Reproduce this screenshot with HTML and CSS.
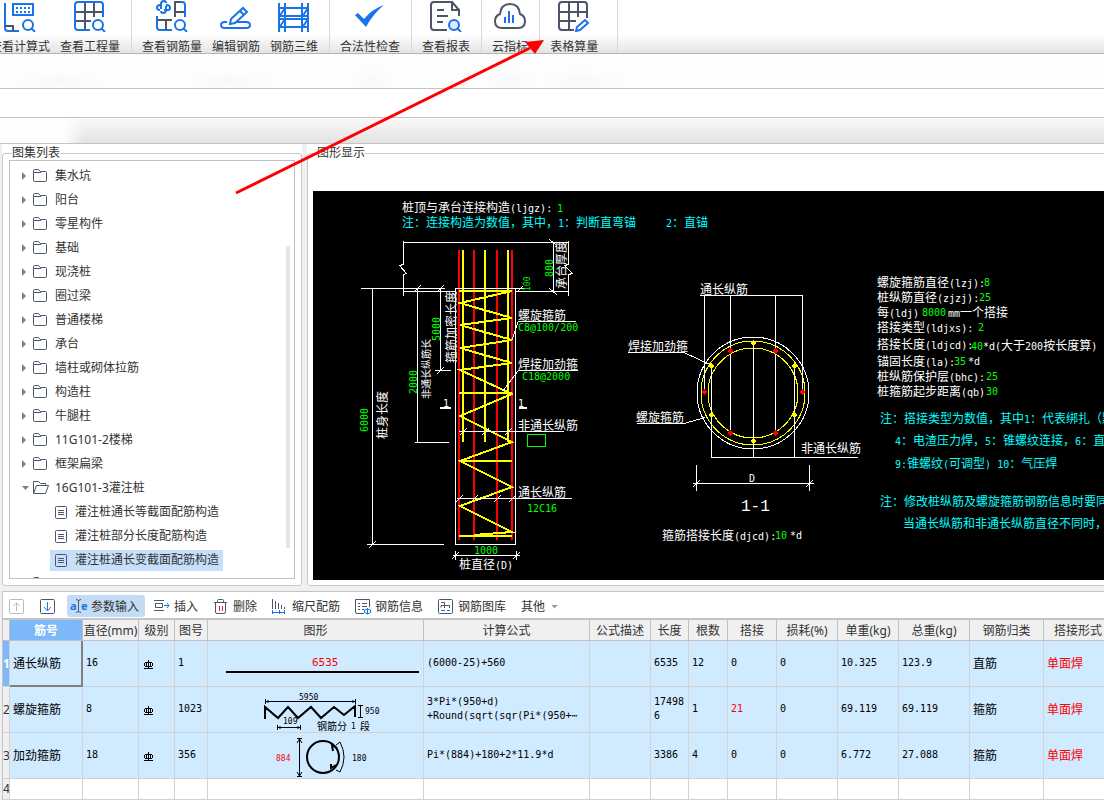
FILE: index.html
```html
<!DOCTYPE html>
<html lang="zh-CN">
<head>
    <meta charset="UTF-8">
    <meta name="viewport" content="width=device-width, initial-scale=1.0">
    <title>表格算量</title>
    <link rel="stylesheet" href="styles.css">
</head>
<body>
    <header class="ribbon">
        <div class="group">
            <button type="button">
                <svg class="big" viewBox="0 0 32 32"><path class="b" d="M1 3v25q0 3 3 3h11M9 4h20v11H9z"/><path class="b" d="M12 8h2m2 0h2m2 0h2m2 0h2M12 12h2m2 0h2m2 0h2m2 0h2"/><path class="g" d="M1 26h8v5"/><circle class="b" cx="24" cy="25" r="5"/><path class="b" d="M27 28l4 4"/></svg>
                查看计算式
            </button>
            <button type="button">
                <svg class="big" viewBox="0 0 32 32"><path class="g" d="M11 2v28M20 2v15M1 12h28M1 21h16"/><path class="b" d="M29 17V5q0-3-3-3H4Q1 2 1 5v22q0 3 3 3h12"/><circle class="b" cx="24" cy="25" r="5"/><path class="b" d="M27 28l4 4"/></svg>
                查看工程量
            </button>
        </div>
        <div class="group">
            <button type="button">
                <svg class="big" viewBox="0 0 32 32"><path class="b" d="M5 9V4q0-3 3-3 2 0 2 2M10 6v4q0 3-3 3-2 0-2-2M4 10q-3 0-3-2 0-3 3-3h2M10 5q4 0 4 3 0 2-2 2H8"/><path class="g" d="M19 17V2h6M19 12h11"/><path class="b" d="M24 2h2q3 0 3 3v12M1 16v11q0 3 3 3h12"/><path class="g" d="M1 20h15M10 20v10"/><circle class="b" cx="24" cy="25" r="5"/><path class="b" d="M27 28l4 4"/></svg>
                查看钢筋量
            </button>
            <button type="button">
                <svg class="big" viewBox="0 0 32 32"><path class="b thin" d="M11 19l12-11 4 4-12 11-5 1zM20 11l4 4"/><path class="b" d="M7 22H5q-4 0-4 3t4 3h21q4 0 4-3t-4-3H16"/></svg>
                编辑钢筋
            </button>
            <button type="button">
                <svg class="big" viewBox="0 0 32 32"><path class="b" d="M1 3v29M7 3v29M24 3v29M30 3v29M1 8h29M1 16h29M1 19h29M1 27h29"/><path class="b thin" d="M1 17l6-9M1 28l6-9M24 17l6-9M24 28l6-9"/></svg>
                钢筋三维
            </button>
        </div>
        <div class="group">
            <button type="button">
                <svg class="big" viewBox="0 0 32 32"><path class="fill" d="M1 15l3-2 6 6Q18 9 30 5 19 14 12 27z"/></svg>
                合法性检查
            </button>
        </div>
        <div class="group">
            <button type="button">
                <svg class="big" viewBox="0 0 32 32"><path class="g" d="M17 30H4q-3 0-3-3V5q0-3 3-3h18l7 8v6M22 2v8h7M7 10h7M7 16h11M7 22h6"/><circle class="b pale" cx="24" cy="25" r="5"/><path class="b" d="M27 28l4 4"/></svg>
                查看报表
            </button>
        </div>
        <div class="group">
            <button type="button">
                <svg class="big" viewBox="0 0 32 32"><path class="g" d="M8 28q-7 0-7-7 0-5 5-7 1-10 10-10t10 10q5 2 5 7 0 7-7 7z"/><path class="b" d="M11 17v6M15 11v12M19 15v8"/></svg>
                云指标
            </button>
        </div>
        <div class="group last">
            <button type="button">
                <svg class="big" viewBox="0 0 32 32"><path class="g" d="M16 30H4q-3 0-3-3V5q0-3 3-3h22q3 0 3 3v13M11 2v28M20 2v15M1 12h28M1 21h17"/><path class="b thin" d="M19 27l8-7 3 3-8 7-4 1z"/></svg>
                表格算量
            </button>
        </div>
    </header>
    <div class="strip ghost"></div>
    <div class="strip plain"></div>
    <div class="strip shade"></div>

    <svg class="arrow" width="560" height="200" viewBox="0 0 560 200">
        <path d="M236 193L530 48" stroke="#f00" stroke-width="3"/>
        <path d="M544 40l-19 2 10 12z" fill="#f00"/>
    </svg>

    <!-- shared icons -->
    <svg class="defs">
        <symbol id="folder" viewBox="0 0 16 14"><path class="g thin" d="M.5 11.500v-10q0-1 1-1h4l2 2h5q1 0 1 1v8q0 1-1 1h-11q-1 0-1-1zM1 3.500h7"/></symbol>
        <symbol id="folder-open" viewBox="0 0 16 14"><path class="g thin" d="M.5 12V.5h5l2 2h5v2M.5 12.500l3-8h12l-3 8z"/></symbol>
        <symbol id="doc" viewBox="0 0 13 13"><rect class="thin g" x=".5" y=".5" width="11" height="12" rx="1"/><path class="thin g" d="M3 4.500h6M3 6.500h6M3 8.500h6"/></symbol>
        <symbol id="grade" viewBox="0 0 10 10"><path d="M4.500 0v9M0 8.500h9M1 2.500h7M1 6.500h7M.5 3v3M8.500 3v3M2.500 3v4M6.500 3v4" fill="none" stroke="#000"/></symbol>
    </svg>

    <main class="work">
        <div class="panel list">
            <fieldset>
                <legend>图集列表</legend>
                <ul class="tree">
                    <li><i class="tri"></i><svg class="folder"><use href="#folder"/></svg>集水坑</li>
                    <li><i class="tri"></i><svg class="folder"><use href="#folder"/></svg>阳台</li>
                    <li><i class="tri"></i><svg class="folder"><use href="#folder"/></svg>零星构件</li>
                    <li><i class="tri"></i><svg class="folder"><use href="#folder"/></svg>基础</li>
                    <li><i class="tri"></i><svg class="folder"><use href="#folder"/></svg>现浇桩</li>
                    <li><i class="tri"></i><svg class="folder"><use href="#folder"/></svg>圈过梁</li>
                    <li><i class="tri"></i><svg class="folder"><use href="#folder"/></svg>普通楼梯</li>
                    <li><i class="tri"></i><svg class="folder"><use href="#folder"/></svg>承台</li>
                    <li><i class="tri"></i><svg class="folder"><use href="#folder"/></svg>墙柱或砌体拉筋</li>
                    <li><i class="tri"></i><svg class="folder"><use href="#folder"/></svg>构造柱</li>
                    <li><i class="tri"></i><svg class="folder"><use href="#folder"/></svg>牛腿柱</li>
                    <li><i class="tri"></i><svg class="folder"><use href="#folder"/></svg>11G101-2楼梯</li>
                    <li><i class="tri"></i><svg class="folder"><use href="#folder"/></svg>框架扁梁</li>
                    <li><i class="tri open"></i><svg class="folder"><use href="#folder-open"/></svg>16G101-3灌注桩</li>
                    <li class="leaf"><span><svg class="doc"><use href="#doc"/></svg>灌注桩通长等截面配筋构造</span></li>
                    <li class="leaf"><span><svg class="doc"><use href="#doc"/></svg>灌注桩部分长度配筋构造</span></li>
                    <li class="leaf"><span class="selected"><svg class="doc"><use href="#doc"/></svg>灌注桩通长变截面配筋构造</span></li>
                    <li><i class="tri"></i><svg class="folder"><use href="#folder"/></svg></li>
                </ul>
            </fieldset>
        </div>

        <div class="panel view">
            <fieldset>
                <legend>图形显示</legend>
                <div class="canvas">
                    <svg class="cad" width="791" height="389" viewBox="313 191 791 389">
                        <text x="402" y="212">桩顶与承台连接构造<tspan class="a">(ljgz):</tspan></text>
                        <text class="a green" x="557" y="212">1</text>
                        <text class="cyan" x="402" y="227">注：连接构造为数值，其中，<tspan class="a">1</tspan>：判断直弯锚</text>
                        <text class="cyan" x="666" y="227"><tspan class="a">2</tspan>：直锚</text>

                        <!-- pile elevation: bars and stirrups -->
                        <path class="red" d="M459 250v290M474 250v290M497 250v290M512 250v290"/>
                        <path class="yellow" d="M463 250v192M485 250v192M508 250v192"/>
                        <path class="yellow" d="M459 291h53L460 303l52 15-52 7 52 15-52 8 52 15-52 7 52 24-52 22 52 26-52 19 52 26-52 19 52 26-38 3M459 393h53M460 461h52M459 536h53"/>

                        <!-- cap, pile outline and dimensions -->
                        <path class="w" d="M403.500 240.500v24l-4 1 7 8-3 1v21M403 242.500h166M568.500 240.500v24l-4 1 8 8-4 1v21M403 291.500h52M516 291.500h53"/>
                        <path class="w" d="M553.500 242v50M549 239l8 7M549 288l8 7"/>
                        <path class="w" d="M361 288.500h84M455 288.500h70M455.500 288v256h60V288M372.500 288v256M367 544.500h77M417.500 288v154M415 442.500h34M440.500 288v83M435 370.500h16"/>
                        <path class="w" d="M414 292l7-7M437 292l7-7M437 374l7-7M369 548l7-7M518 291l5-5"/>
                        <path class="w" d="M453 555.500h67M455.500 551v9M516.500 551v9M452 559l7-7M513 559l7-7"/>
                        <path class="w" d="M518 321.500h58M518 322l-6 18M518 370.500h60M518 371l-15 20M459 431.500h105M457 498.500h115"/>
                        <path class="w" d="M460 435l7-7M482 435l7-7M505 435l7-7M456 502l7-7M471 502l7-7M494 502l7-7M509 502l7-7"/>
                        <path class="w" d="M440 408h11M519 408h8" stroke-width="2"/>
                        <rect x="527.500" y="434.500" width="18" height="12" fill="none" stroke="#0f0"/>

                        <text transform="translate(566 289) rotate(-90)">承台厚度</text>
                        <text class="a green" transform="translate(553 277) rotate(-90)">800</text>
                        <text class="green small" transform="translate(530 291) rotate(-90)">100</text>
                        <text class="a green" transform="translate(368 432) rotate(-90)">6000</text>
                        <text transform="translate(387 439) rotate(-90)">桩身长度</text>
                        <text class="a green" transform="translate(417 394) rotate(-90)">2000</text>
                        <text class="mid" transform="translate(430 399) rotate(-90)">非通长纵筋长</text>
                        <text class="a green" transform="translate(440 341) rotate(-90)">5000</text>
                        <text transform="translate(456 363) rotate(-90)">箍筋加密长度</text>
                        <text class="a" x="443" y="407">1</text>
                        <text class="a" x="518" y="407">1</text>
                        <text x="518" y="320">螺旋箍筋</text>
                        <text class="a green" x="518" y="331">C8@100/200</text>
                        <text x="518" y="369">焊接加劲箍</text>
                        <text class="a green" x="522" y="380">C18@2000</text>
                        <text x="518" y="430">非通长纵筋</text>
                        <text x="518" y="497">通长纵筋</text>
                        <text class="a green" x="527" y="512">12C16</text>
                        <text class="a green" x="474" y="554">1000</text>
                        <text x="459" y="569">桩直径<tspan class="a">(D)</tspan></text>

                        <!-- section 1-1 -->
                        <g class="ring">
                            <circle cx="753" cy="393" r="56" stroke="#fff"/>
                            <circle cx="753" cy="393" r="52" stroke="#ff0"/>
                            <circle cx="753" cy="393" r="45" stroke="#ff0"/>
                        </g>
                        <path class="w" d="M700 295.500h103M704.500 296v96M730.500 296v136M775.500 296v136M802.500 296v96M711.500 367v91M753.500 344v114M794.500 367v91M711 457.500h147"/>
                        <path class="w" d="M628 352.500h56l30 14M637 423.500h47l21-6"/>
                        <path class="w" d="M693 483.500h121M696.500 465v26M809.500 465v26M693 487l7-7M806 487l7-7"/>
                        <path fill="#ff0" d="M750 343l3-3 3 3-3 3zM708 366l3-3 3 3-3 3zM791 366l3-3 3 3-3 3zM708 415l3-3 3 3-3 3zM791 415l3-3 3 3-3 3zM750 441l3-3 3 3-3 3z"/>
                        <path fill="#f00" d="M727 351l3-3 3 3-3 3zM772 351l3-3 3 3-3 3zM701 392l3-3 3 3-3 3zM799 392l3-3 3 3-3 3zM727 433l3-3 3 3-3 3zM772 433l3-3 3 3-3 3z"/>
                        <text x="700" y="294">通长纵筋</text>
                        <text x="628" y="351">焊接加劲箍</text>
                        <text x="636" y="422">螺旋箍筋</text>
                        <text x="801" y="453">非通长纵筋</text>
                        <text class="a" x="749" y="482">D</text>
                        <text class="title" x="741" y="511">1-1</text>
                        <text x="662" y="540">箍筋搭接长度<tspan class="a">(djcd):</tspan></text>
                        <text class="a green" x="775" y="539">10</text>
                        <text class="a" x="790" y="539">*d</text>

                        <!-- parameters -->
                        <text x="877" y="287">螺旋箍筋直径<tspan class="a">(lzj):</tspan></text>
                        <text class="a green" x="984" y="286">8</text>
                        <text x="877" y="302">桩纵筋直径<tspan class="a">(zjzj):</tspan></text>
                        <text class="a green" x="979" y="301">25</text>
                        <text x="877" y="317">每<tspan class="a">(ldj)</tspan></text>
                        <text class="a green" x="922" y="316">8000</text>
                        <text x="948" y="317"><tspan class="a">mm</tspan>一个搭接</text>
                        <text x="877" y="332">搭接类型<tspan class="a">(ldjxs):</tspan></text>
                        <text class="a green" x="978" y="331">2</text>
                        <text x="877" y="349">搭接长度<tspan class="a">(ldjcd):</tspan></text>
                        <text class="a green" x="971" y="350">40</text>
                        <text x="983" y="350"><tspan class="a">*d(</tspan>大于<tspan class="a">200</tspan>按长度算<tspan class="a">)</tspan></text>
                        <text x="877" y="366">锚固长度<tspan class="a">(la):</tspan></text>
                        <text class="a green" x="954" y="365">35</text>
                        <text class="a" x="968" y="365">*d</text>
                        <text x="877" y="381">桩纵筋保护层<tspan class="a">(bhc):</tspan></text>
                        <text class="a green" x="986" y="380">25</text>
                        <text x="877" y="396">桩箍筋起步距离<tspan class="a">(qb)</tspan></text>
                        <text class="a green" x="986" y="395">30</text>
                        <g class="cyan">
                            <text x="880" y="423">注：搭接类型为数值，其中<tspan class="a">1</tspan>：代表绑扎（默</text>
                            <text x="895" y="445"><tspan class="a">4</tspan>：电渣压力焊，<tspan class="a">5</tspan>：锥螺纹连接，<tspan class="a">6</tspan>：直</text>
                            <text x="895" y="468"><tspan class="a">9:</tspan>锥螺纹<tspan class="a">(</tspan>可调型<tspan class="a">) 10</tspan>：气压焊</text>
                            <text x="880" y="506">注：修改桩纵筋及螺旋箍筋钢筋信息时要同</text>
                            <text x="903" y="528">当通长纵筋和非通长纵筋直径不同时，</text>
                        </g>
                    </svg>
                </div>
            </fieldset>
        </div>
    </main>

    <section class="bars">
        <div class="tools">
            <button type="button" aria-label="上移"><svg class="ico" viewBox="0 0 16 16"><path fill="none" stroke="#bbb" d="M2 .5h11q1.500 0 1.500 1.500v11q0 1.500-1.500 1.500H2Q.5 14.500.5 13V2Q.5.5 2 .5zM7.500 12V4M4 7l3.500-3L11 7"/></svg></button>
            <button type="button" aria-label="下移"><svg class="ico" viewBox="0 0 16 16"><rect class="thin g" x=".5" y=".5" width="14" height="14" rx="1"/><path class="thin b" d="M7.500 3v8M4 8l3.500 4L11 8"/></svg></button>
            <button type="button" class="active"><svg class="ico" viewBox="0 0 16 16"><text x="-1" y="11" class="ae">a</text><text x="10" y="11" class="ae">e</text><path class="thin g" d="M5 .5q2.500 0 2.500 2 0-2 2.500-2M7.500 2v10M5 13.500q2.500 0 2.500-2 0 2 2.500 2"/></svg>参数输入</button>
            <button type="button"><svg class="ico" viewBox="0 0 16 16"><path class="thin g" d="M0 1.500h10M0 11.500h10M1.500 4.500h7v4h-7z"/><path class="thin b" d="M10 6.500h5M13 4l2 2.500L13 9"/></svg>插入</button>
            <button type="button"><svg class="ico" viewBox="0 0 16 16"><path class="thin g" d="M1 3.500h13M4.500 3V1.500q0-1 1-1h4q1 0 1 1V3M2.500 4v9q0 1.500 1.500 1.500h7q1.500 0 1.500-1.500V4"/><path fill="none" stroke="#e02020" d="M6.500 7v5M9.500 7v5"/></svg>删除</button>
            <button type="button"><svg class="ico" viewBox="0 0 16 16"><path class="thin g" d="M.5 0v10M3.500 2v8M6.500 4v6M9.500 6v4M12.500 8v2"/><path class="thin b" d="M0 13.500h13M.5 11v4M7.500 11v4M12.500 11v4"/></svg>缩尺配筋</button>
            <button type="button"><svg class="ico" viewBox="0 0 16 16"><path class="thin g" d="M9 14.500H2q-1.500 0-1.500-1.500V.5h14V8M3 4.500h2M7 4.500h5M3 7.500h2M7 7.500h5M3 10.500h2M7 10.500h2"/><path class="thin b" d="M12.500 9v6M9.500 11v2.500l3 1.500 3-1.500V11l-3-1z"/></svg>钢筋信息</button>
            <button type="button"><svg class="ico" viewBox="0 0 16 16"><rect class="thin g" x=".5" y=".5" width="14" height="14" rx="1"/><path class="thin g" d="M3 3.500h3.500V9M3 8.500V6.500h8.500V9"/><path class="thin b" d="M3 11.500h4M9 11.500h3"/></svg>钢筋图库</button>
            <button type="button">其他<i class="tri open"></i></button>
        </div>
        <table>
            <colgroup>
                <col class="c-no"><col class="c-name"><col class="c-dia"><col class="c-grade"><col class="c-fig"><col class="c-shape"><col class="c-formula"><col class="c-desc"><col class="c-len"><col class="c-count"><col class="c-lap"><col class="c-loss"><col class="c-unit"><col class="c-total"><col class="c-type"><col class="c-form">
            </colgroup>
            <thead>
                <tr><th></th><th class="current">筋号</th><th>直径(mm)</th><th>级别</th><th>图号</th><th>图形</th><th>计算公式</th><th>公式描述</th><th>长度</th><th>根数</th><th>搭接</th><th>损耗(%)</th><th>单重(kg)</th><th>总重(kg)</th><th>钢筋归类</th><th>搭接形式</th></tr>
            </thead>
            <tbody>
                <tr>
                    <th class="current">1</th>
                    <td class="zh focus">通长纵筋</td>
                    <td>16</td>
                    <td><svg class="grade"><use href="#grade"/></svg></td>
                    <td>1</td>
                    <td class="shape"><svg width="215" height="45" viewBox="208 641 215 45"><text class="n11 r" x="312" y="666">6535</text><path d="M226 672h193" stroke="#000" stroke-width="2"/></svg></td>
                    <td>(6000-25)+560</td>
                    <td></td>
                    <td>6535</td>
                    <td>12</td>
                    <td>0</td>
                    <td>0</td>
                    <td>10.325</td>
                    <td>123.9</td>
                    <td class="zh">直筋</td>
                    <td class="zh r">单面焊</td>
                </tr>
                <tr>
                    <th>2</th>
                    <td class="zh">螺旋箍筋</td>
                    <td>8</td>
                    <td><svg class="grade"><use href="#grade"/></svg></td>
                    <td>1023</td>
                    <td class="shape"><svg width="215" height="45" viewBox="208 687 215 45">
                        <path class="k" d="M265 719v-12l13 11 10-11 10 11 13-11 10 11 13-11 10 8 11-9v11" stroke-width="2"/>
                        <path class="k" d="M265 701.500h91M265.500 699v5M355.500 699v5M268 700v3M353 700v3M360.500 706v11M358 705.500h5M358 717.500h5M277 727.500h24M277.500 725v5M300.500 725v5M280 726v3M298 726v3"/>
                        <text class="n8" x="299" y="700">5950</text>
                        <text class="n8" x="365" y="714">950</text>
                        <text class="n8" x="283" y="724">109</text>
                        <text class="z9" x="317" y="730">钢筋分</text>
                        <text class="n8" x="351" y="729">1</text>
                        <text class="z9" x="360" y="730">段</text>
                    </svg></td>
                    <td>3*Pi*(950+d)<br>+Round(sqrt(sqr(Pi*(950+⋯</td>
                    <td></td>
                    <td>174986</td>
                    <td>1</td>
                    <td class="r">21</td>
                    <td>0</td>
                    <td>69.119</td>
                    <td>69.119</td>
                    <td class="zh">箍筋</td>
                    <td class="zh r">单面焊</td>
                </tr>
                <tr>
                    <th>3</th>
                    <td class="zh">加劲箍筋</td>
                    <td>18</td>
                    <td><svg class="grade"><use href="#grade"/></svg></td>
                    <td>356</td>
                    <td class="shape"><svg width="215" height="45" viewBox="208 733 215 45">
                        <circle class="k" cx="323" cy="757" r="16" stroke-width="2"/>
                        <path class="k" d="M337 748l-5-3 1 6M336 765l-5 3v-4" stroke-width="2"/>
                        <path class="k" d="M299.500 739v37M297 738.500h5M297 776.500h5M297 743l2.500-4 2.500 4M297 772l2.500 4 2.500-4M336 745l4-3q8 15 0 30l-4-2"/>
                        <text class="n8 r" x="276" y="761">884</text>
                        <text class="n8" x="352" y="761">180</text>
                    </svg></td>
                    <td>Pi*(884)+180+2*11.9*d</td>
                    <td></td>
                    <td>3386</td>
                    <td>4</td>
                    <td>0</td>
                    <td>0</td>
                    <td>6.772</td>
                    <td>27.088</td>
                    <td class="zh">箍筋</td>
                    <td class="zh r">单面焊</td>
                </tr>
                <tr class="blank">
                    <th>4</th>
                    <td></td><td></td><td></td><td></td><td></td><td></td><td></td><td></td><td></td><td></td><td></td><td></td><td></td><td></td><td></td>
                </tr>
            </tbody>
        </table>
    </section>
</body>
</html>
```

FILE: styles.css
```css
* {
    box-sizing: border-box;
}

body {
    margin: 0;
    height: 100vh;
    display: flex;
    flex-direction: column;
    overflow: hidden;
    background: #f0f0f0;
    color: #333;
    font: 12px/18px "Noto Sans", "Noto Sans CJK SC", sans-serif;
}

button {
    border: 0;
    background: none;
    color: inherit;
    font: inherit;
    white-space: nowrap;
}

/* icon strokes */
.b, .g {
    fill: none;
    stroke: #1a73e8;
    stroke-width: 2;
}

.g {
    stroke: #4d5568;
}

.thin {
    stroke-width: 1;
}

.big .thin {
    stroke-width: 2;
}

.fill {
    fill: #1a73e8;
}

.pale {
    fill: #dcebfc;
}

.defs {
    display: none;
}

/* ribbon */
.ribbon {
    flex: none;
    display: flex;
    height: 54px;
    margin-left: -20px;
    overflow: hidden;
    border-bottom: 1px solid #b4b4b4;
    background: linear-gradient(#fff 34px, #e2e2e2 54px);
}

.group {
    display: flex;
    align-items: flex-start;
    flex: none;
    padding: 0 6px 0 5px;
    border-right: 1px solid #d8d8d8;
}

.group.last {
    padding-right: 14px;
}

.group button {
    display: flex;
    flex-direction: column;
    align-items: center;
    gap: 6px;
    padding: 0 5px;
}

.big {
    width: 32px;
    height: 32px;
}

.strip {
    flex: none;
    border-bottom: 1px solid #c4c4c8;
    background: #fff;
}

.ghost {
    height: 35px;
    background:
        radial-gradient(40px 10px at 60px 28px, #f8f8f8, transparent),
        radial-gradient(40px 10px at 230px 28px, #f8f8f8, transparent),
        radial-gradient(20px 12px at 372px 28px, #f8f8f8, transparent),
        radial-gradient(20px 12px at 510px 28px, #f8f8f8, transparent),
        radial-gradient(40px 12px at 582px 28px, #f8f8f8, transparent),
        #fdfdfd;
}

.plain {
    height: 29px;
}

.shade {
    height: 26px;
    background: linear-gradient(90deg, #fdfdfd 64px, transparent 84px), linear-gradient(#fafafa, #e2e2e2);
}

.arrow {
    position: absolute;
    left: 0;
    top: 0;
    fill: none;
    pointer-events: none;
}

/* middle panels */
.work {
    flex: 1;
    min-height: 0;
    display: flex;
    gap: 5px;
    padding: 0 0 5px 2px;
    overflow: hidden;
}

.panel {
    display: flex;
    padding-top: 2px;
    background: #fff;
}

.list {
    flex: none;
    width: 300px;
}

.view {
    flex: 1;
    min-width: 0;
    margin-right: -10px;
}

fieldset {
    flex: 1;
    min-width: 0;
    margin: 0;
    padding: 0 6px 6px;
    border: 1px solid #c8c8c8;
    border-radius: 3px;
}

.view fieldset {
    padding: 31px 5px 5px;
}

legend {
    margin-left: 3px;
    padding: 0;
    line-height: 14px;
}

.view legend {
    margin-left: 4px;
}

.tree {
    height: 100%;
    margin: 0;
    padding: 3px 0 0;
    overflow: hidden;
    list-style: none;
    border: 1px solid #c0c0c0;
    /* thin scroll thumb at the right edge */
    background: linear-gradient(#e6e6e6, #e6e6e6) right 4px top 85px / 4px 302px no-repeat #fff;
}

.tree li {
    display: flex;
    align-items: center;
    height: 24px;
    padding-left: 12px;
}

.tri {
    width: 5px;
    height: 8px;
    margin-right: 6px;
    background: #808080;
    clip-path: polygon(0 0, 80% 50%, 0 100%);
}

.tri.open {
    width: 7px;
    height: 4px;
    margin-right: 4px;
    background: #808080;
    clip-path: polygon(0 0, 100% 0, 50% 100%);
}

.folder {
    width: 16px;
    height: 14px;
    margin-right: 6px;
}

.tree .leaf {
    padding-left: 40px;
}

.leaf span {
    display: flex;
    align-items: center;
    height: 21px;
    padding: 0 4px 0 5px;
}

.doc {
    width: 13px;
    height: 13px;
    margin-right: 7px;
}

.selected {
    background: #c8dffb;
}

/* drawing */
.canvas {
    height: 100%;
    overflow: hidden;
    background: #000;
}

.cad {
    display: block;
    overflow: visible;
}

.cad text {
    fill: #fff;
    font: 12px "Noto Sans CJK SC", sans-serif;
    white-space: pre;
}

.cad .a {
    font: 10px "DejaVu Sans Mono", monospace;
}

.cad .small {
    font: 8px "DejaVu Sans Mono", monospace;
}

.cad .mid {
    font-size: 10px;
}

.cad .title {
    font: 16px "Liberation Mono", monospace;
}

.cad .green {
    fill: #0f0;
}

.cad text.cyan, .cyan text {
    fill: #0ff;
}

.cad path, .cad rect, .cad circle {
    shape-rendering: crispEdges;
}

.w {
    fill: none;
    stroke: #fff;
}

.red, .yellow {
    fill: none;
    stroke: #f00;
    stroke-width: 2;
}

.yellow {
    stroke: #ff0;
}

.ring {
    fill: none;
}

/* bottom toolbar and table */
.bars {
    flex: none;
    margin-left: 2px;
    overflow: hidden;
    background: #fff;
    border: solid #c4c4c8;
    border-width: 1px 0 0 1px;
}

.tools {
    display: flex;
    align-items: center;
    gap: 5px;
    height: 28px;
    padding: 2px 0 0 2px;
    border-bottom: 2px solid #c4c4c8;
}

.tools button {
    display: flex;
    align-items: center;
    gap: 4px;
    height: 22px;
    padding: 1px 6px 0 4px;
}

.tools .active {
    border-radius: 3px;
    background: #c3dcf5;
}

.ico {
    width: 16px;
    height: 16px;
    overflow: visible;
}

.ae {
    fill: #1a73e8;
    font: bold 11px "Noto Sans", sans-serif;
}

.tools .tri {
    margin-left: 2px;
    background: #999;
}

table {
    table-layout: fixed;
    width: 1140px;
    border-collapse: separate;
    border-spacing: 0;
}

.c-no { width: 7px; }
.c-name { width: 73px; }
.c-dia { width: 56px; }
.c-grade { width: 36px; }
.c-fig { width: 33px; }
.c-shape { width: 216px; }
.c-formula { width: 166px; }
.c-desc { width: 61px; }
.c-len { width: 38px; }
.c-count { width: 39px; }
.c-lap { width: 49px; }
.c-loss { width: 61px; }
.c-unit { width: 61px; }
.c-total { width: 71px; }
.c-type { width: 74px; }

th, td {
    height: 46px;
    padding: 0;
    border: solid #d2d2d2;
    border-width: 0 1px 1px 0;
}

th {
    overflow: hidden;
    background: #f0f0f0;
    font-weight: normal;
    white-space: nowrap;
}

thead th {
    height: 21px;
    padding-top: 2px;
    border-color: #c0c0c4;
}

th.current {
    background: #7db8f8;
    color: #fff;
    font-weight: bold;
}

th:last-child {
    padding-left: 10px;
    text-align: left;
}

tbody th:first-child {
    padding: 0;
}

td {
    padding: 0 3px 2px;
    background: #d0eaff;
    color: #000;
    font: 10px/14px "DejaVu Sans Mono", monospace;
    word-break: break-all;
}

.zh {
    font: 12px/14px "Noto Sans CJK SC", sans-serif;
}

.focus {
    box-shadow: inset -1px -1px #808080;
    border-color: #808080;
}

.shape {
    padding: 0;
}

.shape svg {
    display: block;
}

.k {
    fill: none;
    stroke: #000;
}

.n11 {
    font: 11px "DejaVu Sans Mono", monospace;
}

.n8 {
    font: 8px "DejaVu Sans Mono", monospace;
}

.z9 {
    font: 10px "Noto Sans CJK SC", sans-serif;
}

.r {
    color: #f00;
    fill: #f00;
}

.grade {
    display: block;
    width: 10px;
    height: 10px;
    margin: 4px 0 0 2px;
}

.blank th, .blank td {
    height: 21px;
    line-height: 14px;
}

.blank td {
    background: #fff;
}
```
